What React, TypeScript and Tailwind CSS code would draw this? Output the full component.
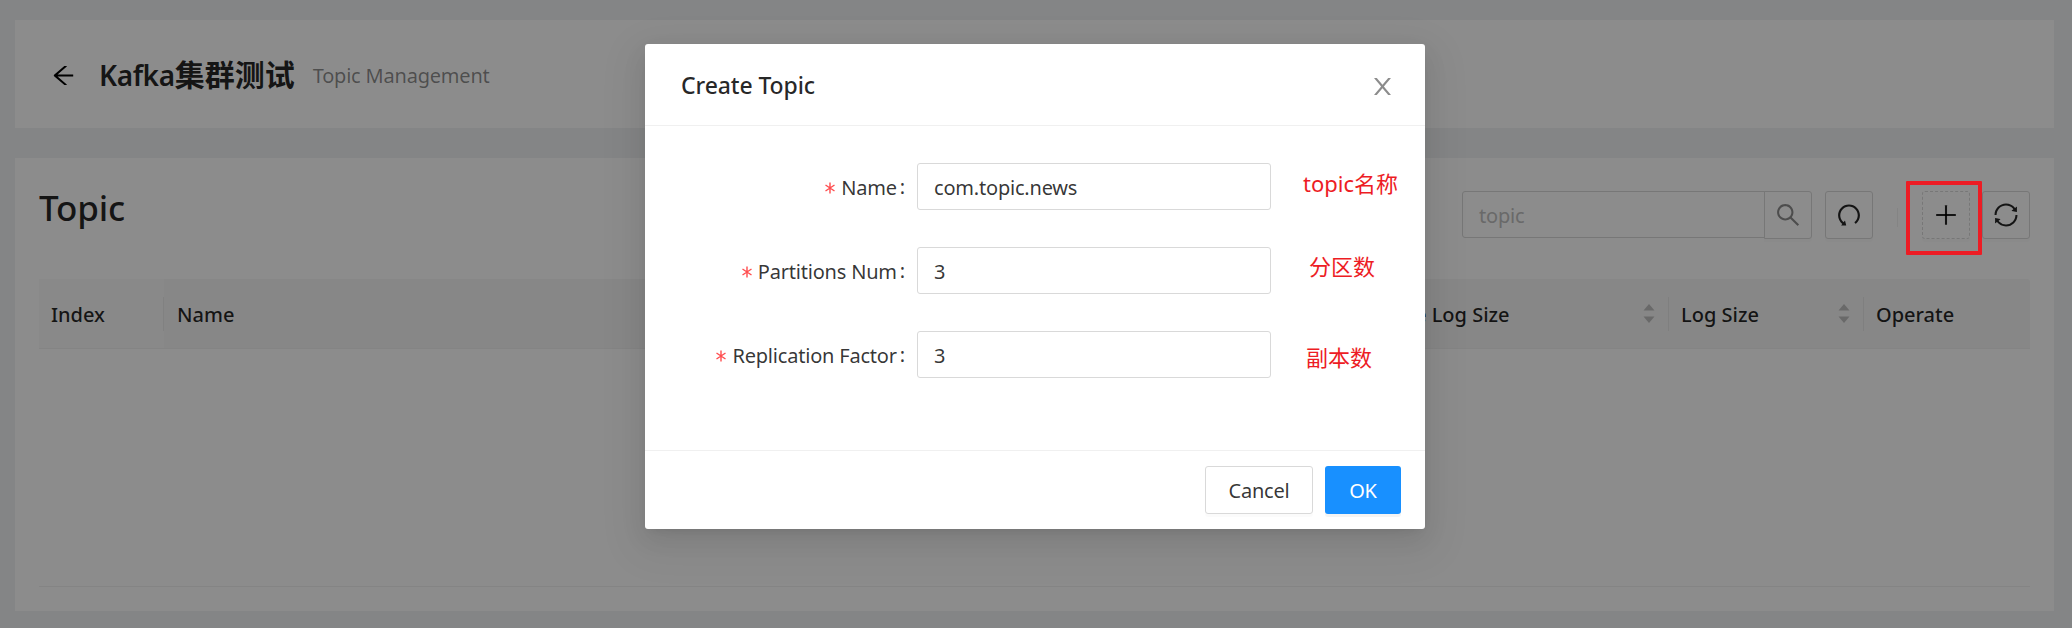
import {
  AiOutlineArrowLeft,
  AiOutlinePlus,
  AiOutlineSearch,
  AiOutlineSync,
  AiOutlineUndo,
} from "react-icons/ai";

function CloseIcon() {
  return (
    <svg width="27" height="27" viewBox="0 0 1024 1024" fill="currentColor" className="mt-[4px] -mr-px text-black/45">
      <path d="M563.8 512l262.5-312.9c4.4-5.2.7-13.1-6.1-13.1h-79.8c-4.7 0-9.2 2.1-12.3 5.7L511.600 449.800 295.100 191.700c-3-3.600-7.500-5.700-12.300-5.700H203c-6.800 0-10.500 7.900-6.100 13.100L459.400 512 196.900 824.900A7.950 7.950 0 0 0 203 838h79.800c4.700 0 9.200-2.100 12.300-5.700l216.500-258.100 216.500 258.100c3 3.600 7.500 5.700 12.300 5.700h79.800c6.800 0 10.500-7.900 6.100-13.100L563.800 512z" />
    </svg>
  );
}

function RequiredMark() {
  return (
    <svg width="10" height="12" viewBox="0 0 10 12" fill="none" stroke="#ff4d4f" strokeWidth="1.4" className="mr-[6px]">
      <path d="M5 0.500V11.500M0.500 3L9.500 9M9.500 3L0.500 9" />
    </svg>
  );
}

function Sorter() {
  return (
    <svg width="12" height="19" viewBox="0 0 12 19" fill="#bfbfbf" className="-mt-px shrink-0">
      <path d="M6 0 L11.500 6.500 H0.500 Z" />
      <path d="M6 19 L11.500 12.500 H0.500 Z" />
    </svg>
  );
}

function HeadCell({
  title,
  className,
  sortable = false,
  divider = true,
}: {
  title: string;
  className: string;
  sortable?: boolean;
  divider?: boolean;
}) {
  return (
    <div className={`flex h-full items-center ${className}`}>
      <span className="flex-1 pt-[2px] text-[20px] font-medium tracking-normal text-black/85">{title}</span>
      {sortable && <Sorter />}
      {divider && <span className="ml-[13px] h-[34px] w-px bg-black/6" />}
    </div>
  );
}

function Field({ label, value, note, noteClass }: { label: string; value: string; note: string; noteClass: string }) {
  return (
    <div className="mb-[37px] flex h-[47px] items-center">
      <div className="flex w-[272px] shrink-0 items-center justify-end pr-[12px] pt-[2px] text-black/80">
        <RequiredMark />
        <span>{label}</span>
        <span className="ml-[3px] -mt-[2px]">:</span>
      </div>
      <div className="flex h-[47px] w-[354px] shrink-0 items-center rounded-[3px] border border-[#d9d9d9] pl-[16px] pt-[2px] text-black/80">
        {value}
      </div>
      <span className={`whitespace-nowrap text-[22px] leading-[28px] tracking-normal text-[#ed1c24] ${noteClass}`}>{note}</span>
    </div>
  );
}

export default function App() {
  return (
    <div className="relative h-[628px] w-[2072px] overflow-hidden bg-[#f0f2f5] pl-[15px] pr-[18px] pt-[20px] font-['Noto_Sans','Noto_Sans_CJK_SC',sans-serif] text-[20px] tracking-[-0.01em]">
      <header className="flex h-[108px] items-center bg-white pl-[35px]">
        <AiOutlineArrowLeft size={27} className="mt-[2px]" />
        <h1 className="ml-[22px] mt-[2px] text-[30px] font-semibold leading-[48px] tracking-normal text-black/85">
          <span className="text-[28px] tracking-[-0.015em]">Kafka</span>集群测试
        </h1>
        <span className="ml-[18px] mt-[4px] text-black/45">Topic Management</span>
      </header>

      <main className="mt-[30px] h-[453px] bg-white pl-[24px] pr-[24px] pt-[33px]">
        <div className="flex h-[88px] items-start">
          <h2 className="-mt-[7px] flex-1 text-[35px] font-medium leading-[48px] text-black/85">Topic</h2>
          <div className="flex h-[47px] w-[303px] items-center rounded-l-[3px] border border-[#d9d9d9] pl-[16px] pt-[2px] text-[#bfbfbf]">topic</div>
          <button className="-ml-px flex size-[48px] items-center justify-center rounded-r-[3px] border border-[#d9d9d9] text-black/45 shadow-[0_3px_0_rgba(0,0,0,0.016)]">
            <AiOutlineSearch size={28} />
          </button>
          <button className="ml-[13px] flex size-[48px] items-center justify-center rounded-[3px] border border-[#d9d9d9] text-black/85 shadow-[0_3px_0_rgba(0,0,0,0.016)]">
            <AiOutlineUndo size={28} />
          </button>
          <span className="ml-[24px] mt-[17px] h-[19px] w-px bg-black/6" />
          <button className="ml-[24px] flex size-[48px] items-center justify-center rounded-[3px] border border-dashed border-[#d9d9d9] text-black/85 shadow-[0_3px_0_rgba(0,0,0,0.016)]">
            <AiOutlinePlus size={28} />
          </button>
          <button className="ml-[12px] flex size-[48px] items-center justify-center rounded-[3px] border border-[#d9d9d9] text-black/85 shadow-[0_3px_0_rgba(0,0,0,0.016)]">
            <AiOutlineSync size={28} />
          </button>
        </div>

        <div className="flex h-[308px] flex-col border-b border-[#f0f0f0]">
          <div className="flex h-[70px] items-center rounded-t-[3px] border-b border-[#f0f0f0] bg-[#f6f6f6]">
            <HeadCell title="Index" className="w-[125px] bg-[#fafafa] pl-[12px]" />
            <HeadCell title="Name" className="w-[1241px] pl-[13px]" divider={false} />
            <HeadCell title="e Log Size" className="w-[264px] pl-[10px]" sortable />
            <HeadCell title="Log Size" className="w-[195px] pl-[12px]" sortable />
            <HeadCell title="Operate" className="flex-1 pl-[12px]" divider={false} />
          </div>
        </div>
      </main>

      <div className="absolute inset-0 bg-black/45" />

      <div className="absolute left-[1906px] top-[181px] h-[74px] w-[76px] rounded-[1px] border-4 border-[#ed1c24]" />

      <section
        role="dialog"
        className="absolute left-[645px] top-[44px] flex h-[485px] w-[780px] flex-col rounded-[3px] bg-white shadow-[0_4.5px_9px_-6px_rgba(0,0,0,0.12),0_9px_24px_0_rgba(0,0,0,0.08),0_13.5px_42px_12px_rgba(0,0,0,0.05)]"
      >
        <div className="flex h-[82px] items-center justify-between border-b border-[#f0f0f0] pl-[36px] pr-[30px]">
          <h3 className="pt-[2px] text-[23px] font-medium leading-[33px] tracking-[-0.005em] text-black/85">Create Topic</h3>
          <CloseIcon />
        </div>
        <div className="flex-1 pt-[37px]">
          <Field label="Name" value="com.topic.news" note="topic名称" noteClass="ml-[32px] -mt-[8px]" />
          <Field label="Partitions Num" value="3" note="分区数" noteClass="ml-[38px] -mt-[10px]" />
          <Field label="Replication Factor" value="3" note="副本数" noteClass="ml-[35px] mt-[4px]" />
        </div>
        <div className="flex h-[79px] items-start justify-end gap-[12px] border-t border-[#f0f0f0] pr-[24px] pt-[15px]">
          <button className="h-[48px] w-[108px] rounded-[3px] border border-[#d9d9d9] pt-[2px] text-black/80 shadow-[0_3px_0_rgba(0,0,0,0.016)]">
            Cancel
          </button>
          <button className="h-[48px] w-[76px] rounded-[3px] bg-[#1890ff] pt-[2px] text-white shadow-[0_3px_0_rgba(0,0,0,0.045)]">
            OK
          </button>
        </div>
      </section>
    </div>
  );
}
